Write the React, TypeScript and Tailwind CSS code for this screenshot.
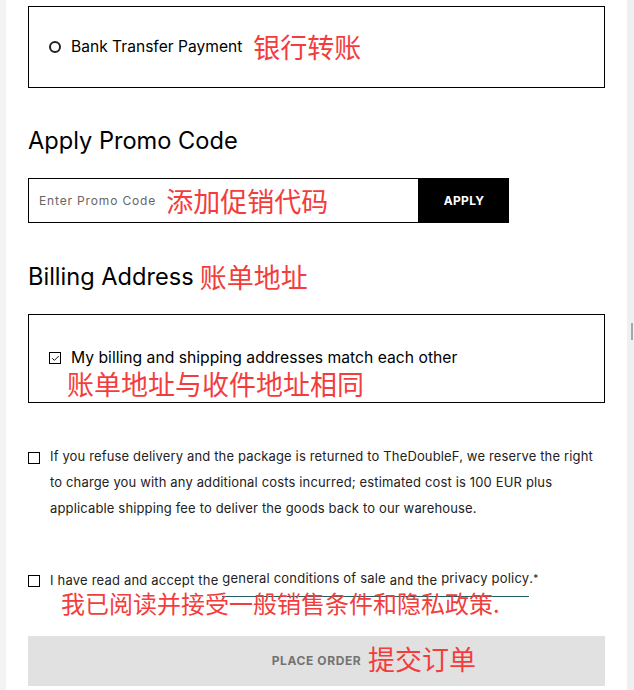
import { Check } from 'lucide-react';

const RED = 'text-[#f33d3d]';
const CJK = "font-['Noto_Sans_CJK_SC',sans-serif]";

function Box({ children, className = '' }: { children: React.ReactNode; className?: string }) {
  return <div className={`border border-black ${className}`}>{children}</div>;
}

function Square({ checked = false }: { checked?: boolean }) {
  return (
    <span className="w-[12px] h-[12px] border border-black flex items-center justify-center shrink-0 bg-white">
      {checked && <Check className="w-[9px] h-[9px]" strokeWidth={2.5} />}
    </span>
  );
}

export default function App() {
  return (
    <div className="flex w-full h-[690px] overflow-hidden bg-white font-['Inter',sans-serif] text-black">
      <div className="w-[6px] shrink-0 bg-[#f3f3f3]" />

      <main className="flex-1 px-[22px] pt-[6px]">
        {/* Payment method */}
        <Box className="h-[82px] flex items-center pl-[20px]">
          <span className="w-[12px] h-[12px] rounded-full border-2 border-[#222] shrink-0" />
          <span className="ml-[10px] text-[15.6px] leading-[20px]">Bank Transfer Payment</span>
          <span className={`ml-[11px] text-[27px] leading-[32px] ${RED} ${CJK}`}>银行转账</span>
        </Box>

        {/* Promo code */}
        <h2 className="mt-[37px] text-[23.6px] leading-[32px] font-normal">Apply Promo Code</h2>
        <div className="mt-[21px] flex h-[45px]">
          <div className="w-[391px] border border-black flex items-center pl-[10px]">
            <span className="text-[12px] tracking-[0.85px] text-[#666]">Enter Promo Code</span>
            <span className={`ml-[10px] text-[27px] leading-[32px] ${RED} ${CJK}`}>添加促销代码</span>
          </div>
          <button className="w-[90px] bg-black text-white text-[12px] font-bold tracking-[0.3px]">APPLY</button>
        </div>

        {/* Billing address */}
        <h2 className="mt-[38px] text-[23.6px] leading-[32px] font-normal flex items-center">
          Billing Address
          <span className={`ml-[6px] text-[27px] leading-[32px] ${RED} ${CJK}`}>账单地址</span>
        </h2>
        <Box className="mt-[21px] h-[89px] pt-[33px] pl-[20px]">
          <div className="flex items-center h-[20px]">
            <Square checked />
            <span className="ml-[10px] text-[15.7px] leading-[20px]">
              My billing and shipping addresses match each other
            </span>
          </div>
          <div className={`pl-[18px] text-[27px] leading-[31px] ${RED} ${CJK}`}>账单地址与收件地址相同</div>
        </Box>

        {/* Refused delivery */}
        <div className="mt-[40px] flex">
          <div className="pt-[9px]">
            <Square />
          </div>
          <p className="ml-[10px] text-[13px] leading-[26px] tracking-[0.15px] text-[#222]">
            If you refuse delivery and the package is returned to TheDoubleF, we reserve the right to charge you
            with any additional costs incurred; estimated cost is 100 EUR plus applicable shipping fee to deliver
            the goods back to our warehouse.
          </p>
        </div>

        {/* Terms */}
        <div className="mt-[46px] flex h-[26px]">
          <div className="pt-[8px]">
            <Square />
          </div>
          <p className="ml-[10px] text-[13px] leading-[26px] tracking-[0.2px] text-[#222] whitespace-nowrap">
            I have read and accept the{' '}
            <span className="inline-block border-b border-[#1f5f5f] leading-[17px] pb-[7px]">
              <span className="relative -top-[2px]">general conditions of sale</span> and the{' '}
              <span className="relative -top-[2px]">privacy policy</span>
            </span>
            <span className="relative -top-[2px]">.</span>
            <span className="relative -top-[3px] text-[10px]">*</span>
          </p>
        </div>
        <div className={`-mt-[4px] pl-[33px] text-[24px] leading-[28px] ${RED} ${CJK} relative`}>
          我已阅读并接受一般销售条件和隐私政策.
        </div>

        {/* Place order */}
        <div className="relative mt-[19px] h-[50px] bg-[#e1e1e1] flex items-center justify-center">
          <span className="text-[12px] font-bold tracking-[0.6px] text-[#737373]">PLACE ORDER</span>
          <span className={`absolute left-[340px] top-[7px] text-[27px] leading-[32px] ${RED} ${CJK}`}>提交订单</span>
        </div>
      </main>

      <div className="relative w-[7px] shrink-0 bg-[#f0f0f0]">
        <div className="absolute left-[4px] top-[323px] w-[2px] h-[17px] bg-[#a8a8a8]" />
      </div>
    </div>
  );
}
